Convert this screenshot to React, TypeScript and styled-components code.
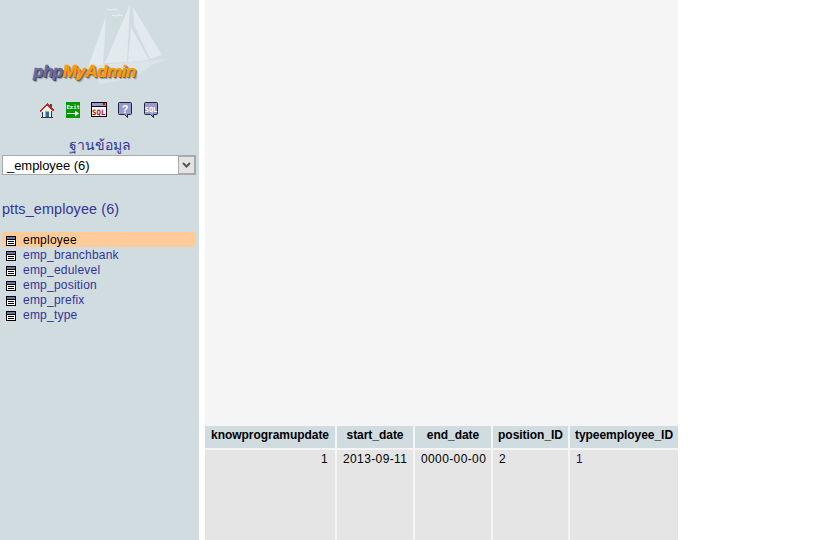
import React from 'react';
import styled, { createGlobalStyle } from 'styled-components';

const GlobalStyle = createGlobalStyle`
html, body {
  margin: 0;
  padding: 0;
  background: #ffffff;
  overflow: hidden;
}
body {
  font-family: "Liberation Sans", Arial, sans-serif;
}
`;

const Page = styled.div`
  display: flex;
  width: 819px;
  height: 540px;
  overflow: hidden;
`;

const Sidebar = styled.nav`
  width: 199px;
  flex: none;
  background: #d0dce0;
  color: #333399;
`;

const LogoBox = styled.div`
  position: relative;
  height: 102px;
`;

const Sails = styled.svg`
  position: absolute;
  left: 84px;
  top: 0;
`;

const LogoText = styled.div`
  position: absolute;
  left: 33px;
  top: 62px;
  font-size: 17px;
  font-weight: bold;
  font-style: italic;
  letter-spacing: -0.5px;
  white-space: nowrap;
  color: #fb9a0c;
  -webkit-text-stroke: 0.5px #fb9a0c;
  text-shadow: 1px 1px 0 #6a5a40, 2px 2px 1px #8a9498;
`;

const LogoPhp = styled.span`
  color: #6a6a9e;
  -webkit-text-stroke: 0.5px #6a6a9e;
  text-shadow: 1px 1px 0 #3c3c58, 2px 2px 1px #8a9498;
`;

const IconRow = styled.div`
  display: flex;
  padding-left: 39px;
  height: 16px;
`;

const IconSlot = styled.span<{ $w: number }>`
  display: block;
  width: ${p => p.$w}px;
  height: 16px;
`;

const DbLabel = styled.div`
  margin-top: 18px;
  height: 19px;
  line-height: 18px;
  text-align: center;
  font-size: 14px;
`;

const DbSelect = styled.div`
  display: flex;
  box-sizing: border-box;
  margin: 0 3px 0 2px;
  height: 20px;
  background: #ffffff;
  border: 1px solid #a9a9a9;
  color: #000000;
  font-size: 13px;
  line-height: 20px;
`;

const DbValue = styled.span`
  flex: 1;
  padding-left: 4px;
  letter-spacing: -0.05px;
`;

const DbArrow = styled.span`
  display: flex;
  box-sizing: border-box;
  align-items: center;
  justify-content: center;
  width: 17px;
  background: #e4e4e4;
  border: 1px solid #a9a9a9;
`;

const DbTitle = styled.div`
  margin: 25px 0 0 2px;
  height: 18px;
  line-height: 18px;
  font-size: 14.4px;
  letter-spacing: 0.12px;
`;

const TableList = styled.ul`
  list-style: none;
  margin: 14px 3px 0 2px;
  padding: 0;
`;

const TableItem = styled.li<{ $active?: boolean }>`
  display: flex;
  align-items: center;
  height: 15px;
  padding-left: 4px;
  gap: 7px;
  font-size: 12px;
  letter-spacing: 0.22px;
  background: ${p => (p.$active ? '#ffcc99' : 'transparent')};
  color: ${p => (p.$active ? '#000000' : '#333399')};
`;

const TableGlyph = styled.svg`
  flex: none;
  margin-top: 3px;
`;

const Main = styled.main`
  display: flex;
  flex-direction: column;
  justify-content: flex-end;
  box-sizing: border-box;
  width: 473px;
  height: 540px;
  margin-left: 6px;
  background: #f5f5f5;
`;

const Grid = styled.div`
  display: grid;
  grid-template-columns: 130px 76px 76px 75px 108px;
  grid-template-rows: 22px 90px;
  column-gap: 2px;
  row-gap: 2px;
  font-size: 12px;
  color: #000000;
`;

const HeadCell = styled.div`
  background: #d0dce0;
  font-weight: bold;
  text-align: center;
  line-height: 18px;
  white-space: nowrap;
  letter-spacing: -0.04px;
`;

const Cell = styled.div<{ $align?: string; $link?: boolean }>`
  box-sizing: border-box;
  background: #e5e5e5;
  padding: 2px 7px 2px 6px;
  line-height: 14px;
  letter-spacing: 0.38px;
  white-space: nowrap;
  text-align: ${p => p.$align ?? 'left'};
  color: ${p => (p.$link ? '#330066' : '#000000')};
`;

const HomeIcon = () => (
  <svg width="16" height="16" viewBox="0 0 16 16" shapeRendering="crispEdges">
    <path d="M11 2h2v4h-2z" fill="#444" />
    <path d="M3 8h1V7h1V6h1V5h1V4h2v1h1v1h1v1h1v1h1v7H3z" fill="#f2f0ea" />
    <path d="M8 1h1v1h1v1h1v1h1v1h1v1h1v1h1v2h-1V9h-1V8h-1V7h-1V6h-1V5H9V4H7v1H6v1H5v1H4v1H3v1H2v1H1V8h1V7h1V6h1V5h1V4h1V3h1V2h1z" fill="#c02a20" />
    <path d="M3 10h1v5H3zM12 9h1v6h-1zM2 15h12v1H2z" fill="#33333f" />
    <path d="M6 9h4v6H6z" fill="#a8a8b8" />
    <path d="M7 10h3v5H7z" fill="#2f6aa8" />
  </svg>
);

const ExitIcon = () => (
  <svg width="14" height="16" viewBox="0 0 14 16">
    <rect width="14" height="16" fill="#009a00" />
    <text x="0.5" y="6.5" fontFamily="DejaVu Sans Mono, monospace" fontSize="5.6" fontWeight="bold" fill="#ffffff">Exit</text>
    <path d="M1 11h10" stroke="#fff" strokeWidth="1" shapeRendering="crispEdges" />
    <path d="M9 8.5l4 3-4 3z" fill="#fff" />
  </svg>
);

const SqlWindowIcon = () => (
  <svg width="16" height="16" viewBox="0 0 16 16" shapeRendering="crispEdges">
    <rect x="0.5" y="0.5" width="15" height="14" fill="#fff" stroke="#000" />
    <rect x="1" y="1" width="14" height="3" fill="#9999cc" />
    <rect x="12" y="1" width="2" height="2" fill="#cc0000" />
    <rect x="1" y="4" width="14" height="1" fill="#000" />
    <text x="1" y="12.5" fontFamily="DejaVu Sans Mono, monospace" fontSize="7.4" fontWeight="bold" fill="#cc0000" shapeRendering="auto">SQL</text>
  </svg>
);

const HelpIcon = () => (
  <svg width="14" height="16" viewBox="0 0 14 16">
    <path d="M1.5.5h11a1 1 0 0 1 1 1v10a1 1 0 0 1-1 1H9.5v3l-3-3h-5a1 1 0 0 1-1-1v-10a1 1 0 0 1 1-1z" fill="#9999cc" stroke="#222244" />
    <text x="7" y="10.5" textAnchor="middle" fontFamily="Liberation Sans, sans-serif" fontSize="11" fontWeight="bold" fill="#ffffff">?</text>
  </svg>
);

const SqlBubbleIcon = () => (
  <svg width="14" height="16" viewBox="0 0 14 16">
    <path d="M1.5.5h11a1 1 0 0 1 1 1v10a1 1 0 0 1-1 1H9.5v3l-3-3h-5a1 1 0 0 1-1-1v-10a1 1 0 0 1 1-1z" fill="#9999cc" stroke="#222244" />
    <text x="7" y="9.5" textAnchor="middle" fontFamily="DejaVu Sans Mono, monospace" fontSize="7" fontWeight="bold" fill="#ffffff">SQL</text>
  </svg>
);

const TableIcon = () => (
  <TableGlyph width="10" height="10" viewBox="0 0 10 10" shapeRendering="crispEdges">
    <rect width="10" height="10" fill="#000" />
    <rect x="1" y="1" width="8" height="2" fill="#7070a8" />
    <rect x="1" y="4" width="8" height="5" fill="#fff" />
    <path d="M2 5.5h6M2 7.5h6" stroke="#000" />
  </TableGlyph>
);

const tables = ['employee', 'emp_branchbank', 'emp_edulevel', 'emp_position', 'emp_prefix', 'emp_type'];

export default function App() {
  return (
    <Page>
      <GlobalStyle />
      <Sidebar>
        <LogoBox>
          <Sails width="86" height="88" viewBox="0 0 86 88">
            <g fill="#e3eaed">
              <path d="M22 16 5 65h14z" />
              <path d="M46 4 21 63l22-1z" />
              <path d="M47 27l-3 35 21-2z" />
              <path d="M49 7 78 55 66 59 50 25z" />
            </g>
            <path d="M3 66 83 59 68 65 50 78 16 84l-5-8z" fill="#dbe5e8" />
            <path d="M23 9l4 1 3-1 4 1M28 15l4 1 3-1 4 1" stroke="#e9eff1" strokeWidth="1.2" fill="none" />
          </Sails>
          <LogoText>
            <LogoPhp>php</LogoPhp>MyAdmin
          </LogoText>
        </LogoBox>
        <IconRow>
          <IconSlot $w={27}><HomeIcon /></IconSlot>
          <IconSlot $w={25}><ExitIcon /></IconSlot>
          <IconSlot $w={27}><SqlWindowIcon /></IconSlot>
          <IconSlot $w={26}><HelpIcon /></IconSlot>
          <IconSlot $w={14}><SqlBubbleIcon /></IconSlot>
        </IconRow>
        <DbLabel>ฐานข้อมูล</DbLabel>
        <DbSelect>
          <DbValue>_employee (6)</DbValue>
          <DbArrow>
            <svg width="9" height="6" viewBox="0 0 9 6">
              <path d="M1 1l3.5 3.5L8 1" fill="none" stroke="#555" strokeWidth="2" />
            </svg>
          </DbArrow>
        </DbSelect>
        <DbTitle>ptts_employee (6)</DbTitle>
        <TableList>
          {tables.map((name, i) => (
            <TableItem key={name} $active={i === 0}>
              <TableIcon />
              {name}
            </TableItem>
          ))}
        </TableList>
      </Sidebar>
      <Main>
        <Grid>
          <HeadCell>knowprogramupdate</HeadCell>
          <HeadCell>start_date</HeadCell>
          <HeadCell>end_date</HeadCell>
          <HeadCell>position_ID</HeadCell>
          <HeadCell>typeemployee_ID</HeadCell>
          <Cell $align="right">1</Cell>
          <Cell>2013-09-11</Cell>
          <Cell>0000-00-00</Cell>
          <Cell>2</Cell>
          <Cell $link>1</Cell>
        </Grid>
      </Main>
    </Page>
  );
}
